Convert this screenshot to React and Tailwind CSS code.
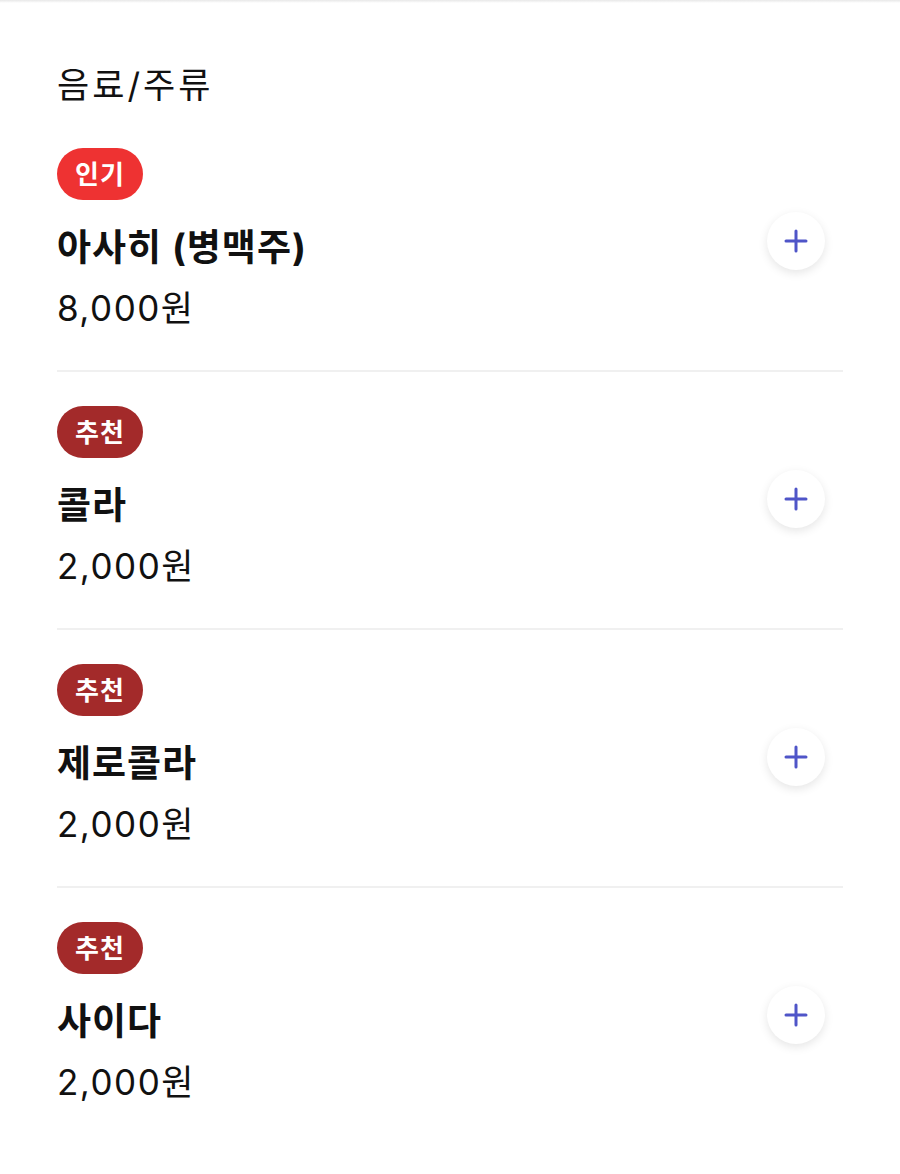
const items = [
  { name: '아사히 (병맥주)', price: '8,000원', tag: '인기' },
  { name: '콜라', price: '2,000원', tag: '추천' },
  { name: '제로콜라', price: '2,000원', tag: '추천' },
  { name: '사이다', price: '2,000원', tag: '추천' },
]

function Badge({ tag }) {
  const color = tag === '인기' ? 'bg-[#ee3232]' : 'bg-[#a32a2a]'
  return (
    <span className={`inline-flex h-[52px] w-[86px] items-center justify-center rounded-full ${color} text-[26px] font-bold tracking-[1px] text-white`}>
      {tag}
    </span>
  )
}

function AddButton() {
  return (
    <button className="flex h-[58px] w-[58px] items-center justify-center rounded-full bg-white shadow-[0_3px_10px_rgba(0,0,0,0.1)]">
      <svg width="24" height="24" viewBox="0 0 24 24" fill="none" stroke="#4f55c8" strokeWidth="3" strokeLinecap="round">
        <path d="M12 2v20M2 12h20" />
      </svg>
    </button>
  )
}

function MenuItem({ item, last }) {
  return (
    <div className={`flex items-center justify-between pt-[34px] pb-[38px] ${last ? '' : 'border-b-2 border-[#f0f0f0]'}`}>
      <div className="flex flex-col">
        <div><Badge tag={item.tag} /></div>
        <div className="mt-[24px] text-[37px] leading-[48px] font-bold tracking-[1px] text-[#111]">{item.name}</div>
        <div className="mt-[12px] text-[35px] leading-[48px] tracking-[1.5px] text-[#111]">{item.price}</div>
      </div>
      <div className="mr-[18px] mt-[2px]">
        <AddButton />
      </div>
    </div>
  )
}

export default function App() {
  return (
    <div className="min-h-[1174px] bg-white" style={{ fontFamily: 'Inter, "Noto Sans CJK KR", "Noto Sans", sans-serif' }}>
      <div className="h-[3px] bg-gradient-to-b from-[#e8e8e8] to-white" />
      <div className="px-[57px]">
        <h2 className="mt-[58px] text-[35px] leading-[48px] font-normal tracking-[3px] text-[#111]">음료/주류</h2>
        <div className="mt-[5px]">
          {items.map((item, i) => (
            <MenuItem key={item.name} item={item} last={i === items.length - 1} />
          ))}
        </div>
      </div>
    </div>
  )
}
